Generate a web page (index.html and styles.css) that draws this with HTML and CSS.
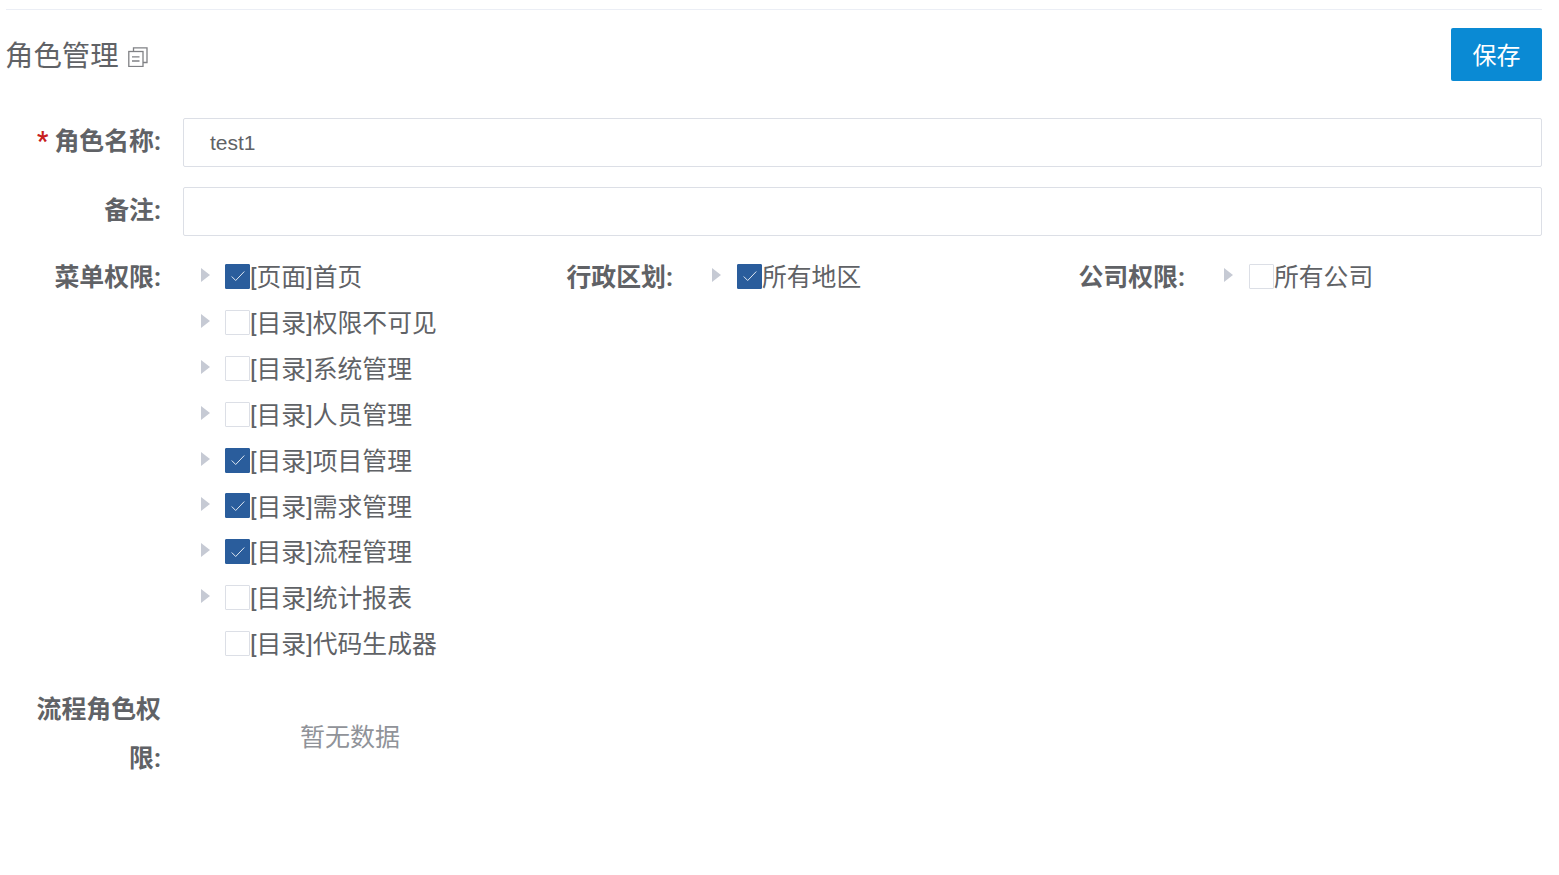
FILE: index.html
```html
<!DOCTYPE html>
<html lang="zh">
<head>
<meta charset="utf-8">
<title>角色管理</title>
<link rel="stylesheet" href="styles.css">
</head>
<body>
<div class="page">
  <header class="head">
    <h1 class="title">角色管理
      <svg class="title-icon" width="20" height="20" viewBox="0 0 20 20" fill="none" stroke="#808185" stroke-width="1.3"><path d="M5.5 4.5V0.8H19V15.5H15"/><rect x="0.8" y="4.5" width="14.2" height="15"/><path d="M4 9.8h7.5M4 14h7.5"/></svg>
    </h1>
    <button class="save"><span class="save-text">保存</span></button>
  </header>
  <div class="form">
    <div class="row">
      <label class="label"><span class="star">*</span> 角色名称:</label>
      <div class="input">test1</div>
    </div>
    <div class="row">
      <label class="label">备注:</label>
      <div class="input"></div>
    </div>
    <div class="perms">
      <div class="perm perm-menu">
        <label class="label">菜单权限:</label>
        <ul class="tree">
          <li class="node"><i class="arrow"></i><span class="box on"><svg viewBox="0 0 14 14" width="14" height="14"><path d="M0.7 7.5l4 4L13.3 2.5" fill="none" stroke="#dfe8f2" stroke-width="1"/></svg></span><span class="txt">[页面]首页</span></li>
          <li class="node"><i class="arrow"></i><span class="box"></span><span class="txt">[目录]权限不可见</span></li>
          <li class="node"><i class="arrow"></i><span class="box"></span><span class="txt">[目录]系统管理</span></li>
          <li class="node"><i class="arrow"></i><span class="box"></span><span class="txt">[目录]人员管理</span></li>
          <li class="node"><i class="arrow"></i><span class="box on"><svg viewBox="0 0 14 14" width="14" height="14"><path d="M0.7 7.5l4 4L13.3 2.5" fill="none" stroke="#dfe8f2" stroke-width="1"/></svg></span><span class="txt">[目录]项目管理</span></li>
          <li class="node"><i class="arrow"></i><span class="box on"><svg viewBox="0 0 14 14" width="14" height="14"><path d="M0.7 7.5l4 4L13.3 2.5" fill="none" stroke="#dfe8f2" stroke-width="1"/></svg></span><span class="txt">[目录]需求管理</span></li>
          <li class="node"><i class="arrow"></i><span class="box on"><svg viewBox="0 0 14 14" width="14" height="14"><path d="M0.7 7.5l4 4L13.3 2.5" fill="none" stroke="#dfe8f2" stroke-width="1"/></svg></span><span class="txt">[目录]流程管理</span></li>
          <li class="node"><i class="arrow"></i><span class="box"></span><span class="txt">[目录]统计报表</span></li>
          <li class="node"><i class="arrow hidden"></i><span class="box"></span><span class="txt">[目录]代码生成器</span></li>
        </ul>
      </div>
      <div class="perm perm-area">
        <label class="label">行政区划:</label>
        <ul class="tree">
          <li class="node"><i class="arrow"></i><span class="box on"><svg viewBox="0 0 14 14" width="14" height="14"><path d="M0.7 7.5l4 4L13.3 2.5" fill="none" stroke="#dfe8f2" stroke-width="1"/></svg></span><span class="txt">所有地区</span></li>
        </ul>
      </div>
      <div class="perm perm-company">
        <label class="label">公司权限:</label>
        <ul class="tree">
          <li class="node"><i class="arrow"></i><span class="box"></span><span class="txt">所有公司</span></li>
        </ul>
      </div>
    </div>
    <div class="row-flow">
      <label class="label label-wrap">流程角色权限:</label>
      <div class="empty">暂无数据</div>
    </div>
  </div>
</div>
</body>
</html>
```
FILE: styles.css
```css
* { box-sizing: border-box; }
html, body { margin: 0; padding: 0; background: #fff; }
body {
  font-family: Roboto, "Noto Sans CJK SC", sans-serif;
  color: #606266;
  font-size: 24.9px;
  height: 875px;
  overflow: hidden;
}
.page { padding: 9px 17px 0 6px; }
.head {
  border-top: 1px solid #ebeef5;
  padding-top: 18px;
  height: 72px;
  display: flex;
  justify-content: space-between;
  align-items: flex-start;
}
.title {
  margin: 0 0 0 -1px;
  padding-top: 2px;
  font-size: 28.4px;
  font-weight: 400;
  line-height: 53px;
  color: #606266;
  display: flex;
  align-items: center;
  gap: 9px;
}
.title-icon { margin-top: 0; }
.save {
  width: 91px;
  height: 53px;
  border: 0;
  border-radius: 2px;
  background: #0a8ad4;
  color: #fff;
  font: inherit;
  font-size: 24px;
  padding: 0 0 3px;
}
.form { padding-top: 37px; }
.row {
  display: flex;
  margin-bottom: 20px;
}
.row .label { line-height: 47px; }
.label {
  display: block;
  flex: none;
  width: 155px;
  font-weight: 700;
  text-align: right;
  line-height: 44px;
  color: #606266;
}
.star { color: #c81e1e; }
.input {
  flex: 1;
  margin-left: 22px;
  height: 49px;
  border: 1px solid #dcdfe6;
  border-radius: 2px;
  padding-left: 26px;
  font-family: "Liberation Sans", sans-serif;
  font-size: 21px;
  line-height: 47px;
}
.perms { display: flex; align-items: flex-start; }
.perm { display: flex; }
.perm-menu { width: 511px; }
.perm-area { width: 512px; }
.perm-area .label, .perm-company .label { width: 156px; }
.tree { list-style: none; margin: 0 0 0 22px; padding: 0; }
.node {
  display: flex;
  align-items: center;
  height: 45.9px;
  padding-bottom: 2px;
  white-space: nowrap;
  font-size: 24.8px;
}
.txt { line-height: 1.2; }
.arrow {
  width: 0; height: 0;
  margin: -6px 15px 0 18px;
  border-left: 9px solid #c6cad4;
  border-top: 7px solid transparent;
  border-bottom: 7px solid transparent;
}
.perm-area .arrow, .perm-company .arrow { margin-left: 17px; margin-right: 16px; }
.arrow.hidden { visibility: hidden; }
.box {
  flex: none;
  width: 25px;
  height: 25px;
  border: 1px solid #dcdfe6;
  border-radius: 1px;
  background: #fff;
  display: flex;
  align-items: center;
  justify-content: center;
  margin-top: -3px;
}
.box.on { background: #2a5d9c; border-color: #2a5d9c; }
.row-flow { display: flex; margin-top: 16px; }
.label-wrap { line-height: 49px; padding-left: 30px; }
.empty {
  width: 334px;
  text-align: center;
  margin-left: 22px;
  color: #909399;
  font-size: 25px;
  line-height: 106px;
}
```
